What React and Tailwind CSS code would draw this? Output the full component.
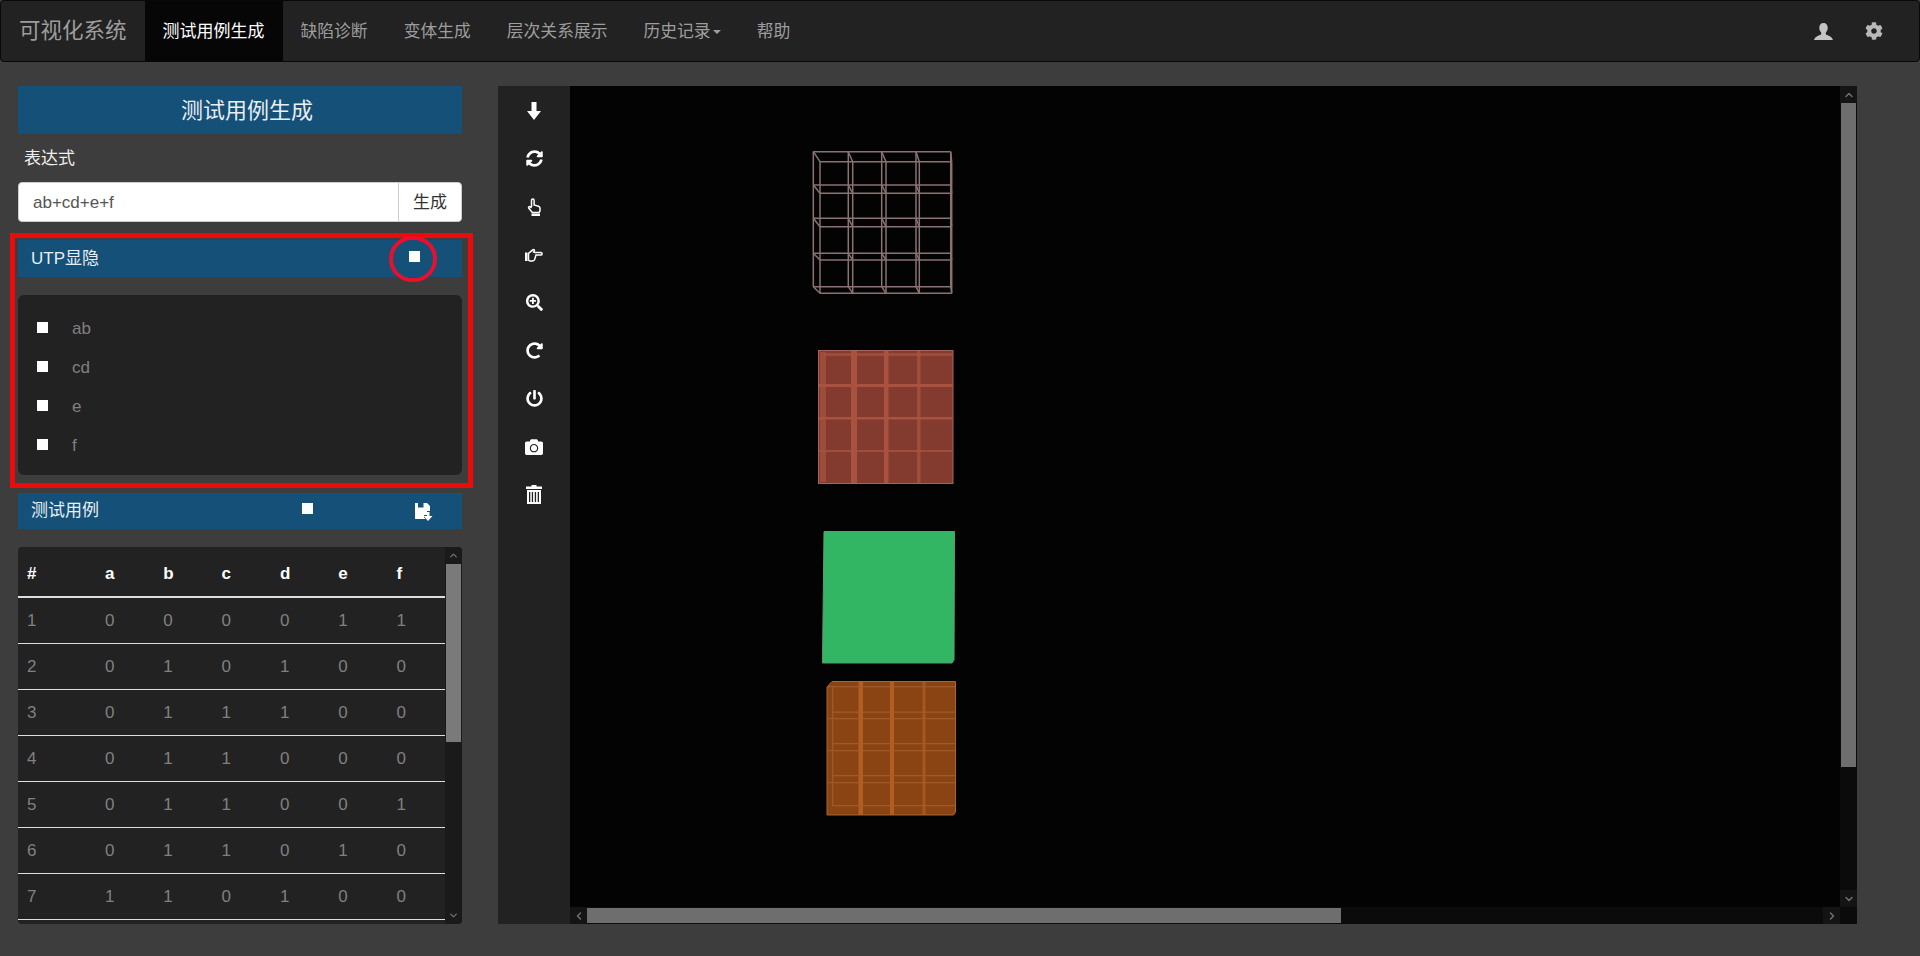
import React from "react";
import { ChevronUp, ChevronDown, ChevronLeft, ChevronRight } from "lucide-react";
import { FaSyncAlt, FaSearchPlus, FaRedoAlt, FaPowerOff, FaCamera, FaCog } from "react-icons/fa";

const NAV = [
  ["测试用例生成", true],
  ["缺陷诊断"],
  ["变体生成"],
  ["层次关系展示"],
  ["历史记录", false, true],
  ["帮助"],
];
const HEAD = ["#", "a", "b", "c", "d", "e", "f"];
const ROWS = [
  [1, 0, 0, 0, 0, 1, 1],
  [2, 0, 1, 0, 1, 0, 0],
  [3, 0, 1, 1, 1, 0, 0],
  [4, 0, 1, 1, 0, 0, 0],
  [5, 0, 1, 1, 0, 0, 1],
  [6, 0, 1, 1, 0, 1, 0],
  [7, 1, 1, 0, 1, 0, 0],
];

function ArrowIcon() {
  return (
    <svg width="14" height="18" viewBox="0 0 14 18" fill="#fff">
      <path d="M4.500 0h5v9H14l-7 9-7-9h4.500z" />
    </svg>
  );
}

function HandIcon({ right }) {
  return (
    <svg width="18" height="18" viewBox="0 0 18 18" className={right ? "rotate-90" : ""}>
      <path d="M6.500 9V2.200a1.300 1.300 0 0 1 2.600 0V7l4.300 1.300c1 .3 1.600 1 1.600 2V13l-1 1.500H7.300L3.800 10.300c-.8-1 .5-2.300 1.500-1.400L6.500 10" fill="none" stroke="#fff" strokeWidth="1.500" />
      <rect x="6.500" y="15.500" width="8.500" height="2.500" fill="#fff" />
    </svg>
  );
}

function TrashIcon() {
  return (
    <svg width="16" height="19" viewBox="0 0 16 19" fill="#fff">
      <path d="M5.500 0h5v1.500H16v2.500H0V1.500h5.500z" />
      <path d="M1 5h14v14H1zM3 7v10h1.300V7zM5.800 7v10h1.300V7zM8.800 7v10h1.300V7zM11.700 7v10H13V7z" fillRule="evenodd" />
    </svg>
  );
}

const SizedIcon = (Icon, size) => () => <Icon size={size} />;
const TOOLS = [
  ArrowIcon,
  SizedIcon(FaSyncAlt, 17),
  () => <HandIcon />,
  () => <HandIcon right />,
  SizedIcon(FaSearchPlus, 17),
  SizedIcon(FaRedoAlt, 17),
  SizedIcon(FaPowerOff, 17),
  SizedIcon(FaCamera, 18),
  () => <span className="block -mt-[1px]"><TrashIcon /></span>,
];

function Check({ className = "" }) {
  return <span className={"block w-[11px] h-[11px] bg-white shrink-0 " + className} />;
}

function SaveIcon() {
  return (
    <svg width="18" height="18" viewBox="0 0 18 18" fill="#fff">
      <path d="M0 0h12l3 3v5h-3v4H9v3h1v1H0z" />
      <rect x="3" y="0" width="5.500" height="4.500" fill="#145078" />
      <path d="M12 9h2.500v4H17.500l-4.500 5-4.500-5H12z" />
    </svg>
  );
}

function UserIcon() {
  return (
    <svg width="19" height="17" viewBox="0 0 18 16" fill="#c4c4c4">
      <path d="M9 0c2.700 0 4 2 4 4.500 0 2-.8 3.500-1.800 4.500v1.500c1 1 5.800 1.500 6.800 5.500H0c1-4 5.800-4.500 6.800-5.500V9C5.800 8 5 6.500 5 4.500 5 2 6.300 0 9 0z" />
    </svg>
  );
}

function Cubes() {
  const ax = [813.3, 848.3, 881.7, 916, 950.7];
  const ay = [151.7, 185, 218.3, 253.3, 286.7];
  const bx = [820, 852.7, 886, 919.3, 951.7];
  const by = [161.7, 193.3, 226.7, 260, 293.3];
  return (
    <svg className="absolute left-[-570px] top-[-86px] pointer-events-none" width="1920" height="956" viewBox="0 0 1920 956">
      {/* wire frame */}
      <g stroke="#8a7272" strokeWidth="1.500" fill="none">
        {ax.map((x) => <line key={"av" + x} x1={x} y1={ay[0]} x2={x} y2={ay[4]} />)}
        {ay.map((y) => <line key={"ah" + y} x1={ax[0]} y1={y} x2={ax[4]} y2={y} />)}
        {bx.map((x) => <line key={"bv" + x} x1={x} y1={by[0]} x2={x} y2={by[4]} />)}
        {by.map((y) => <line key={"bh" + y} x1={bx[0]} y1={y} x2={bx[4]} y2={y} />)}
        {ax.map((x, i) => ay.map((y, j) => <line key={"d" + i + j} x1={x} y1={y} x2={bx[i]} y2={by[j]} />))}
      </g>
      {/* red */}
      <rect x="818.500" y="350.500" width="134.500" height="133" fill="#843b2f" stroke="#a0685c" />
      <g fill="#a9523f">
        <rect x="820" y="352" width="6" height="130" opacity="0.7" />
        <rect x="824" y="353" width="129" height="3" opacity="0.7" />
        <rect x="851" y="351" width="6" height="132" />
        <rect x="884" y="351" width="4.500" height="132" />
        <rect x="917" y="351" width="3.500" height="132" opacity="0.8" />
        <rect x="819" y="384" width="134" height="3" />
        <rect x="819" y="417" width="134" height="2.500" />
        <rect x="819" y="450" width="134" height="2" opacity="0.8" />
      </g>
      {/* green */}
      <path d="M824 531.500H954.500L954 660L952 663H822.500Z" fill="#32b663" stroke="#5f9b76" />
      {/* orange */}
      <path d="M832 681.500H955.500V812L953.500 815H827V687Z" fill="#8a4413" stroke="#a9652f" />
      <g fill="#b05e21">
        <rect x="858.500" y="682" width="4.500" height="133" />
        <rect x="890" y="682" width="4" height="133" />
        <rect x="922.500" y="682" width="3" height="133" opacity="0.75" />
      </g>
      <g fill="#a65e2c" opacity="0.8">
        <rect x="827" y="686" width="128" height="1.300" />
        <rect x="832" y="711.500" width="123" height="1.300" />
        <rect x="827" y="718" width="128" height="1.300" />
        <rect x="832" y="743" width="123" height="1.300" />
        <rect x="827" y="750" width="128" height="1.300" />
        <rect x="832" y="775" width="123" height="1.300" />
        <rect x="827" y="782" width="128" height="1.300" />
        <rect x="832" y="805" width="123" height="1.300" />
        <rect x="832" y="686" width="1.300" height="120" />
      </g>
    </svg>
  );
}

export default function App() {
  return (
    <div className="w-[1920px] h-[956px] overflow-hidden bg-[#3d3d3d] text-[17px]" style={{ fontFamily: '"Liberation Sans", "Noto Sans CJK SC", sans-serif' }}>
      <nav className="h-[62px] flex items-stretch bg-[#222222] border border-[#080808] rounded-[4px] text-[#9d9d9d]">
        <div className="flex items-center pl-[18px] pr-[18px] pt-[1px] text-[21.500px]">可视化系统</div>
        {NAV.map(([label, active, caret]) => (
          <div key={label} className={"flex items-center px-[18px] pt-[1px] " + (active ? "text-[17px] bg-[#060606] text-white" : "text-[16.800px]")}>
            {label}
            {caret && <span className="ml-[2px] w-0 h-0 border-x-[4px] border-x-transparent border-t-[4px] border-t-[#9d9d9d]" />}
          </div>
        ))}
        <div className="ml-auto flex items-center gap-[32px] pr-[36px]">
          <UserIcon />
          <FaCog size={18} color="#b8b8b8" />
        </div>
      </nav>

      <main className="flex items-start pl-[18px] pt-[24px]">
        <section className="w-[444px] shrink-0">
          <h1 className="h-[48px] flex items-center justify-center pl-[14px] bg-[#145078] text-[22px] text-[#e8eef2] font-normal">测试用例生成</h1>
          <div className="h-[48px] flex items-center pl-[6px] pt-[2px] text-[#eeeeee]">表达式</div>
          <div className="h-[40px] flex bg-white rounded-[4px] border border-[#cccccc] text-[#555555]">
            <div className="flex-1 flex items-center pl-[14px] pt-[1px]">ab+cd+e+f</div>
            <div className="w-[63px] flex items-center justify-center pt-[1px] border-l border-[#cccccc] text-[#333333]">生成</div>
          </div>

          <div className="relative mt-[11px] -ml-[8px] w-[463px] h-[255px] border-[5px] border-[#ec0a0a] pl-[3px] pr-[6px] pt-[2px]">
            <div className="relative h-[37px] bg-[#145078] flex items-center pl-[13px] text-[#e8eef2] text-[17px]">
              UTP显隐
              <Check className="absolute left-[391px] top-[11px]" />
              <span className="absolute left-[371px] top-[-4px] w-[48px] h-[46px] rounded-full border-[4px] border-[#e8102c]" />
            </div>
            <div className="mt-[18px] h-[180px] bg-[#222222] rounded-[6px] pt-[14px] pl-[19px] text-[#808080]">
              {["ab", "cd", "e", "f"].map((t) => (
                <div key={t} className="h-[39px] flex items-center gap-[24px]">
                  <Check className="-mt-[3px]" />
                  <span>{t}</span>
                </div>
              ))}
            </div>
          </div>

          <div className="relative mt-[5px] h-[36px] bg-[#145078] flex items-center pl-[13px] text-[#e8eef2] text-[17px]">
            测试用例
            <Check className="absolute left-[284px] top-[10px]" />
            <span className="absolute left-[397px] top-[10px]"><SaveIcon /></span>
          </div>

          <div className="mt-[18px] h-[377px] flex bg-[#222222] rounded-[4px] overflow-hidden">
            <table className="w-[427px] h-fit table-fixed border-separate border-spacing-0 text-[#808080]">
              <colgroup>
                <col className="w-[77.500px]" />
                {[1, 2, 3, 4, 5, 6].map((i) => <col key={i} className="w-[58.300px]" />)}
              </colgroup>
              <thead>
                <tr>
                  {HEAD.map((h, i) => (
                    <th key={h} className={"h-[51px] pt-[4px] text-left text-white font-bold border-b-2 border-[#dddddd] " + (i === 0 ? "pl-[9px]" : "pl-[9.500px]")}>{h}</th>
                  ))}
                </tr>
              </thead>
              <tbody>
                {ROWS.map((r) => (
                  <tr key={r[0]}>
                    {r.map((v, i) => (
                      <td key={i} className={"h-[46px] border-b border-[#dddddd] " + (i === 0 ? "pl-[9px]" : "pl-[9.500px]")}>{v}</td>
                    ))}
                  </tr>
                ))}
              </tbody>
            </table>
            <div className="w-[17px] flex flex-col items-center bg-[#1a1a1a] text-[#6f6f6f]">
              <div className="h-[17px] flex items-center justify-center"><ChevronUp size={11} strokeWidth={3} /></div>
              <div className="w-[15px] h-[178px] bg-[#7a7a7a]" />
              <div className="mt-auto h-[17px] flex items-center justify-center"><ChevronDown size={11} strokeWidth={3} /></div>
            </div>
          </div>
        </section>

        <section className="ml-[36px] w-[1359px] h-[838px] flex">
          <div className="w-[72px] bg-[#222222] flex flex-col items-center pt-[15px] text-white">
            {TOOLS.map((Icon, i) => (
              <div key={i} className="h-[48px] shrink-0 flex items-start pt-[1px]"><Icon /></div>
            ))}
          </div>
          <div className="relative flex-1 flex flex-col bg-[#030303] overflow-hidden">
            <Cubes />
            <div className="relative flex-1 flex min-h-0">
              <div className="flex-1" />
              <div className="w-[17px] bg-[#0b0b0b] flex flex-col items-center text-[#6f6f6f]">
                <div className="h-[17px] w-full bg-[#141414] flex items-center justify-center"><ChevronUp size={12} strokeWidth={3} /></div>
                <div className="w-[15px] h-[664px] bg-[#6e6e6e]" />
                <div className="mt-auto h-[17px] w-full bg-[#141414] flex items-center justify-center"><ChevronDown size={12} strokeWidth={3} /></div>
              </div>
            </div>
            <div className="relative h-[17px] flex bg-[#0b0b0b] text-[#6f6f6f]">
              <div className="w-[17px] bg-[#141414] flex items-center justify-center"><ChevronLeft size={12} strokeWidth={3} /></div>
              <div className="w-[754px] h-[15px] my-px bg-[#6e6e6e]" />
              <div className="ml-auto w-[17px] mr-[17px] bg-[#141414] flex items-center justify-center"><ChevronRight size={12} strokeWidth={3} /></div>
            </div>
          </div>
        </section>
      </main>
    </div>
  );
}
